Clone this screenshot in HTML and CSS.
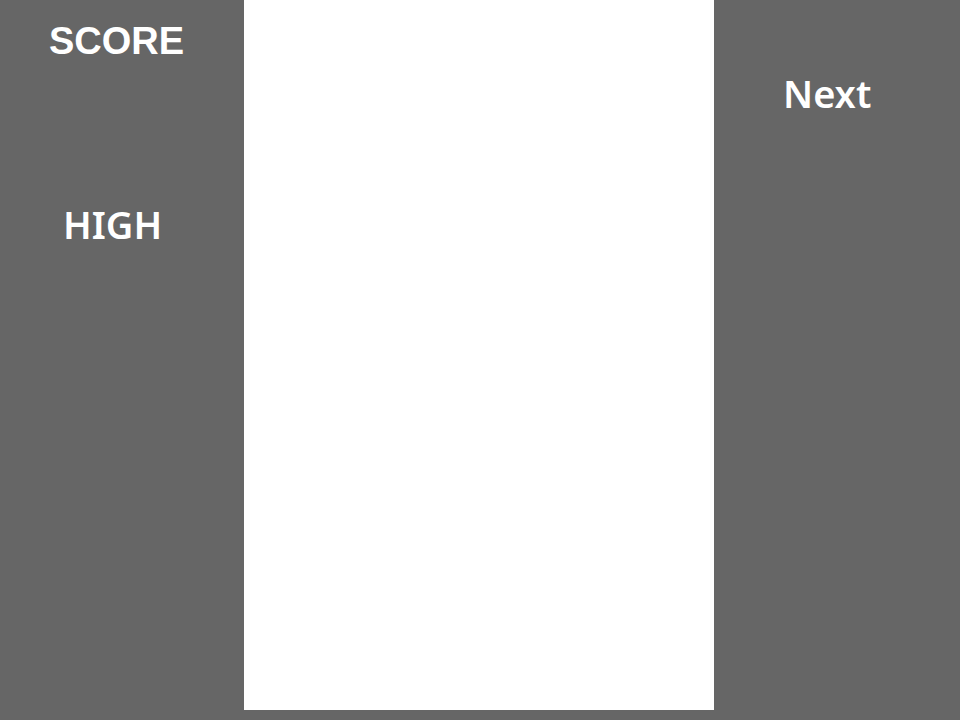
FILE: index.html
```html
<!DOCTYPE html>
<html lang="en">
<head>
    <meta charset="UTF-8">
    <meta name="viewport" content="width=device-width, initial-scale=1.0">
    <title>Tetris</title>
    <link rel="stylesheet" href="styles.css">
</head>
<body>
    <div class="game">
        <div class="side left">
            <div class="score-label">SCORE</div>
            <div class="high-label">HIGH</div>
        </div>
        <div class="board"></div>
        <div class="side right">
            <div class="next-label">Next</div>
        </div>
    </div>
</body>
</html>
```

FILE: styles.css
```css
body {
    margin: 0;
    padding: 0;
    background-color: #666666;
    color: #ffffff;
    font-family: 'Noto Sans', sans-serif;
}

.game {
    display: flex;
    width: 960px;
    height: 720px;
}

.side {
    display: flex;
    flex-direction: column;
}

.left {
    width: 244px;
}

.right {
    width: 246px;
}

.board {
    width: 470px;
    height: 710px;
    background-color: #ffffff;
}

.score-label {
    font-family: 'Liberation Sans', Arial, sans-serif;
    font-weight: bold;
    font-size: 38px;
    line-height: 40px;
    padding: 21px 0 0 49px;
}

.high-label {
    font-weight: 600;
    font-size: 38px;
    line-height: 44px;
    padding: 141px 0 0 63px;
}

.next-label {
    font-weight: 600;
    font-size: 38px;
    line-height: 44px;
    padding: 71px 0 0 69px;
}
```
